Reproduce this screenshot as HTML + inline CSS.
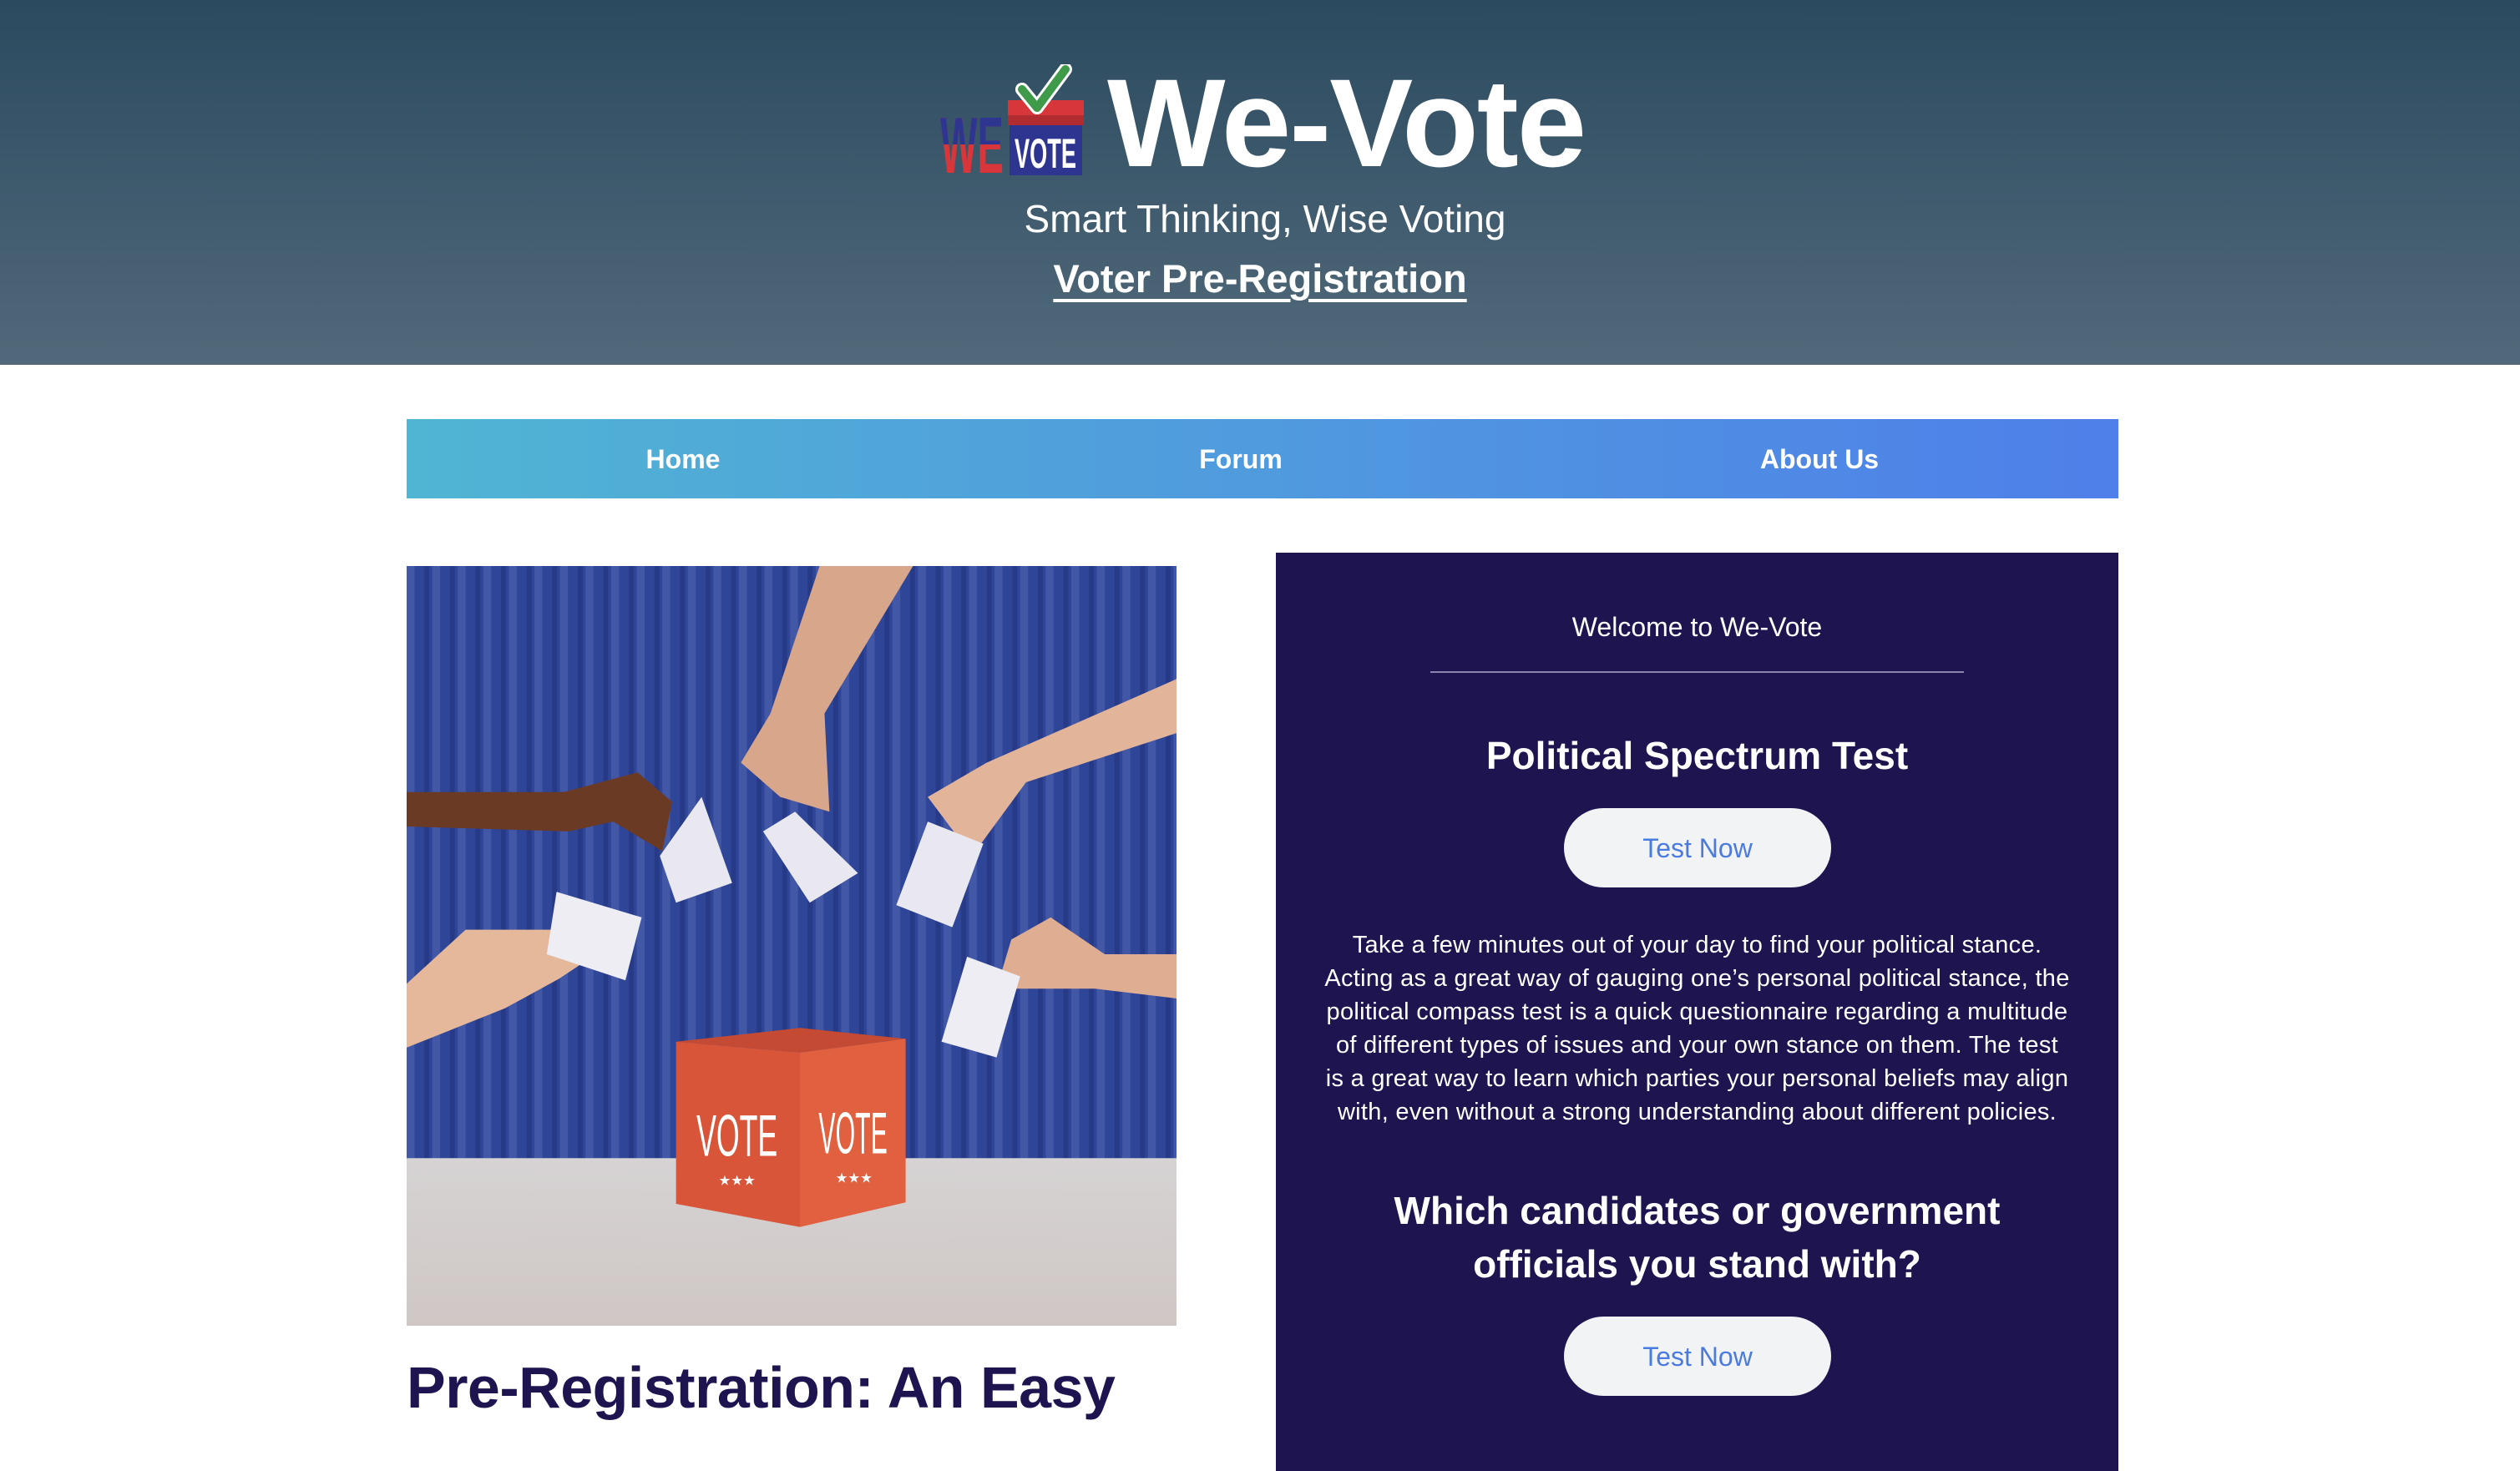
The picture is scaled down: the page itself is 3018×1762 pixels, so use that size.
<!DOCTYPE html>
<html><head><meta charset="utf-8"><style>
*{margin:0;padding:0;box-sizing:border-box}
body{width:3018px;height:1704px;overflow:hidden;background:#fff;font-family:"Liberation Sans",sans-serif;position:relative}
.hdr{position:absolute;left:0;top:0;width:3018px;height:437px;background:linear-gradient(#2b4a5f,#51697a)}
.abs{position:absolute}
.title{left:1326px;top:62px;font-size:150px;font-weight:bold;color:#fff;line-height:170px;letter-spacing:-2px}
.tag{left:6px;width:3018px;text-align:center;top:232px;font-size:46px;color:#fff;line-height:60px}
.pre{left:0px;width:3018px;text-align:center;top:302px;font-size:47px;color:#fff;font-weight:bold;line-height:64px}
.pre span{text-decoration:underline;text-decoration-thickness:4px;text-underline-offset:8px}
.nav{left:487px;top:502px;width:2050px;height:95px;background:linear-gradient(90deg,#50b5d3,#4f7fe9)}
.nav div{position:absolute;top:0;line-height:97px;font-size:32px;font-weight:bold;color:#fff;transform:translateX(-50%)}
.panel{left:1528px;top:662px;width:1009px;height:1100px;background:#1e1550;color:#fff;text-align:center}
.btn{position:absolute;left:345px;width:320px;height:95px;border-radius:48px;background:#f2f3f5;color:#4a7be0;font-size:32px;line-height:97px}
.para{white-space:nowrap}
</style></head><body>
<div class="hdr"></div>
<svg class="abs" style="left:1126px;top:77px" width="180" height="133" viewBox="0 0 180 133">
<defs><clipPath id="top"><rect x="0" y="0" width="80" height="96"/></clipPath></defs>
<text x="0" y="130" font-family="Liberation Sans" font-weight="bold" font-size="96" fill="#d8363a" textLength="76" lengthAdjust="spacingAndGlyphs">WE</text>
<text x="0" y="130" clip-path="url(#top)" font-family="Liberation Sans" font-weight="bold" font-size="96" fill="#2e3591" textLength="76" lengthAdjust="spacingAndGlyphs">WE</text>
<rect x="81" y="43" width="91" height="18" fill="#d7363a"/>
<rect x="81" y="61" width="91" height="12" fill="#b02c30"/>
<rect x="83" y="73" width="87" height="60" fill="#2e3591"/>
<text x="126" y="124" text-anchor="middle" font-family="Liberation Sans" font-weight="bold" font-size="50" fill="#fff" textLength="74" lengthAdjust="spacingAndGlyphs">VOTE</text>
<path d="M98 30 L116 52 L150 6" fill="none" stroke="#fff" stroke-width="16" stroke-linecap="round" stroke-linejoin="round"/>
<path d="M98 30 L116 52 L150 6" fill="none" stroke="#3f9a4a" stroke-width="10" stroke-linecap="round" stroke-linejoin="round"/>
</svg>
<div class="abs title">We-Vote</div>
<div class="abs tag">Smart Thinking, Wise Voting</div>
<div class="abs pre"><span>Voter Pre-Registration</span></div>
<div class="abs nav"><div style="left:331px">Home</div><div style="left:999px">Forum</div><div style="left:1692px">About Us</div></div>
<svg class="abs" style="left:487px;top:678px" width="922" height="910" viewBox="0 0 1566 1546" preserveAspectRatio="none">
<defs><pattern id="cur" width="52" height="1566" patternUnits="userSpaceOnUse"><rect width="52" height="1566" fill="#2f4597"/><rect x="0" width="16" height="1566" fill="#4258a6"/><rect x="36" width="10" height="1566" fill="#263a87"/></pattern>
<linearGradient id="fl" x1="0" y1="0" x2="0" y2="1"><stop offset="0" stop-color="#d6d3d4"/><stop offset="1" stop-color="#cfc7c4"/></linearGradient></defs>
<rect width="1566" height="1210" fill="url(#cur)"/>
<rect y="1205" width="1566" height="341" fill="url(#fl)"/>
<path d="M0 460 L320 460 L470 420 L540 480 L520 580 L420 520 L330 540 L0 530Z" fill="#6b3a25"/>
<path d="M840 0 L1030 0 L850 300 L860 500 L760 470 L680 400 L740 300Z" fill="#d8a68a"/>
<path d="M1566 230 L1566 340 L1260 440 L1150 590 L1060 470 L1180 400Z" fill="#e2b49a"/>
<path d="M0 850 L120 740 L330 740 L370 800 L310 840 L200 900 L0 980Z" fill="#e5b89c"/>
<path d="M1566 790 L1566 880 L1400 860 L1200 860 L1230 760 L1310 715 L1420 790Z" fill="#dfae92"/>
<polygon points="515,590 600,470 662,645 548,685" fill="#e9e8f0"/>
<polygon points="725,540 790,500 918,625 820,685" fill="#e9e8f0"/>
<polygon points="1060,520 1173,565 1110,735 996,690" fill="#e9e8f0"/>
<polygon points="305,663 478,715 445,843 285,790" fill="#eeedf3"/>
<polygon points="1140,795 1248,835 1200,1000 1088,968" fill="#eeedf3"/>
<polygon points="548,968 800,940 1015,962 800,990" fill="#c44a33"/>
<polygon points="548,968 800,990 800,1345 548,1298" fill="#d9553a"/>
<polygon points="800,990 1015,962 1015,1295 800,1345" fill="#e0603f"/>
<text x="672" y="1200" text-anchor="middle" font-family="Liberation Sans" font-size="120" fill="#fff" textLength="165" lengthAdjust="spacingAndGlyphs">VOTE</text>
<text x="908" y="1195" text-anchor="middle" font-family="Liberation Sans" font-size="120" fill="#fff" textLength="140" lengthAdjust="spacingAndGlyphs">VOTE</text>
<text x="672" y="1260" text-anchor="middle" font-size="28" fill="#fff">★★★</text>
<text x="910" y="1255" text-anchor="middle" font-size="28" fill="#fff">★★★</text>
</svg>
<div class="abs" style="left:487px;top:1612px;font-size:70px;font-weight:bold;color:#1e1450;line-height:100px;white-space:nowrap;letter-spacing:-0.5px">Pre-Registration: An Easy</div>
<div class="abs panel">
<div class="abs" style="left:0;width:1009px;top:67px;font-size:32px;line-height:44px">Welcome to We-Vote</div>
<div class="abs" style="left:185px;top:142px;width:639px;height:2px;background:#8a85b0"></div>
<div class="abs" style="left:0;width:1009px;top:210px;font-size:46px;font-weight:bold;line-height:66px">Political Spectrum Test</div>
<div class="btn" style="top:306px">Test Now</div>
<div class="abs para" style="left:0;width:1009px;top:450px;font-size:29px;letter-spacing:0.3px;line-height:40px">Take a few minutes out of your day to find your political stance.<br>Acting as a great way of gauging one’s personal political stance, the<br>political compass test is a quick questionnaire regarding a multitude<br>of different types of issues and your own stance on them. The test<br>is a great way to learn which parties your personal beliefs may align<br>with, even without a strong understanding about different policies.</div>
<div class="abs para" style="left:0;width:1009px;top:756px;font-size:46px;font-weight:bold;line-height:64px">Which candidates or government<br>officials you stand with?</div>
<div class="btn" style="top:915px">Test Now</div>
</div>
</body></html>
